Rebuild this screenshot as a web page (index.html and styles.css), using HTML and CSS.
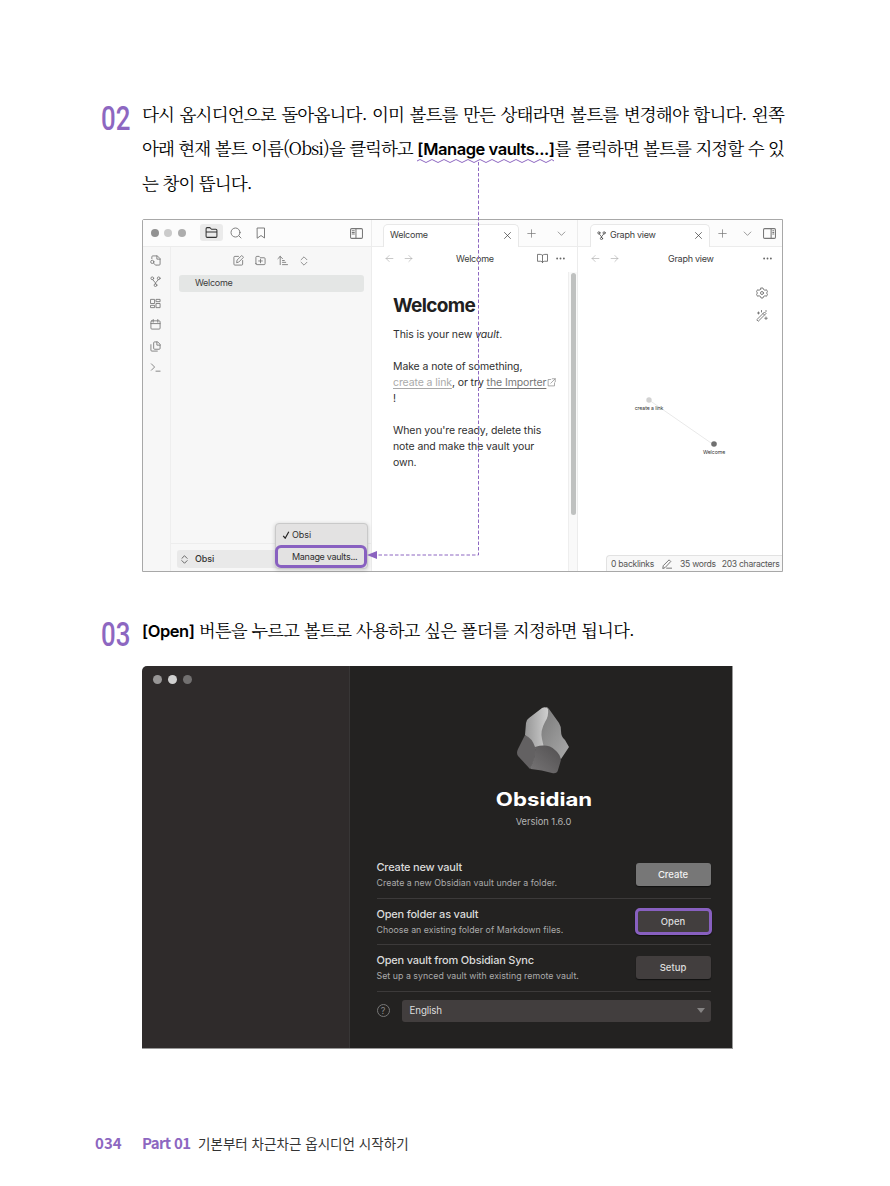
FILE: index.html
```html
<!DOCTYPE html>
<html lang="ko">
<head>
<meta charset="utf-8">
<title>기본부터 차근차근 옵시디언 시작하기</title>
<link rel="stylesheet" href="styles.css">
</head>
<body>
<svg class="defs" width="0" height="0">
  <symbol id="fork" viewBox="0 0 24 24"><circle cx="5" cy="5" r="3"/><circle cx="19" cy="5" r="3"/><circle cx="12" cy="20" r="3"/><path d="M6 8l5 6q1 1 1 3M18 8l-5 6q-1 1-1 3"/></symbol>
  <symbol id="left" viewBox="0 0 24 24"><path d="M21 12H3m8-8-8 8 8 8"/></symbol>
  <symbol id="right" viewBox="0 0 24 24"><path d="M3 12h18m-8-8 8 8-8 8"/></symbol>
  <symbol id="close" viewBox="0 0 24 24"><path d="M4 4l16 16M20 4 4 20"/></symbol>
  <symbol id="plus" viewBox="0 0 24 24"><path d="M2 12h20M12 2v20"/></symbol>
  <symbol id="down" viewBox="0 0 24 24"><path d="m3 8 9 9 9-9"/></symbol>
  <symbol id="updown" viewBox="0 0 24 24"><path d="m5 9 7-7 7 7M5 15l7 7 7-7"/></symbol>
  <symbol id="dots" viewBox="0 0 24 24"><g fill="currentColor" stroke="none"><circle cx="3" cy="12" r="2.500"/><circle cx="12" cy="12" r="2.500"/><circle cx="21" cy="12" r="2.500"/></g></symbol>
</svg>
<main class="page">
  <section class="step step-two">
    <div class="num">02</div>
    <div class="body">
      <p class="line">다시 옵시디언으로 돌아옵니다. 이미 볼트를 만든 상태라면 볼트를 변경해야 합니다. 왼쪽</p>
      <p class="line tight">아래 현재 볼트 이름<span class="lat">(Obsi)</span>을 클릭하고 <b class="key wavy">[Manage vaults...]<svg class="wave" width="137" height="5" viewBox="0 0 137 5"><path d="M0 3q3-3 6 0t6 0 6 0 6 0 6 0 6 0 6 0 6 0 6 0 6 0 6 0 6 0 6 0 6 0 6 0 6 0 6 0 6 0 6 0 6 0 6 0 6 0 5 0"/></svg></b>를 클릭하면 볼트를 지정할 수 있</p>
      <p class="line last">는 창이 뜹니다.</p>
      <div class="app">
        <div class="side">
          <div class="bar side-bar">
            <i class="dot d1"></i><i class="dot d2"></i><i class="dot d3"></i>
            <span class="folder"><svg class="ic s13" viewBox="0 0 24 24"><path d="M2 19V5a2 2 0 0 1 2-2h5l3 3h8a2 2 0 0 1 2 2v11a2 2 0 0 1-2 2H4a2 2 0 0 1-2-2zM2 11h20"/></svg></span>
            <svg class="ic s12 search" viewBox="0 0 24 24"><circle cx="11" cy="11" r="9"/><path d="m18 18 4 4"/></svg>
            <svg class="ic s12 mark" viewBox="0 0 24 24"><path d="M5 2h14v20l-7-5-7 5z"/></svg>
            <svg class="ic s13 panel" viewBox="0 0 24 24"><rect x="1" y="3" width="22" height="18" rx="2"/><path d="M11 3v18M4 7h4M4 10h4M4 13h4"/></svg>
          </div>
          <div class="side-main">
            <div class="ribbon">
              <svg class="ic" viewBox="0 0 24 24"><path d="M4 8V4a2 2 0 0 1 2-2h10l6 6v12a2 2 0 0 1-2 2h-7M15 2v7h7"/><circle cx="5" cy="15" r="3.500"/><path d="m8 18 4 4"/></svg>
              <svg class="ic"><use href="#fork"/></svg>
              <svg class="ic" viewBox="0 0 24 24"><path d="M2 3h8v9H2zM14 3h8v5h-8zM14 12h8v9h-8zM2 16h8v5H2z"/></svg>
              <svg class="ic" viewBox="0 0 24 24"><rect x="2" y="4" width="20" height="18" rx="2"/><path d="M2 10h20M7 1v6M17 1v6"/></svg>
              <svg class="ic" viewBox="0 0 24 24"><path d="M16 2h-6a2 2 0 0 0-2 2v12a2 2 0 0 0 2 2h10a2 2 0 0 0 2-2V8zM15 2v7h7M2 8v12a2 2 0 0 0 2 2h12"/></svg>
              <svg class="ic" viewBox="0 0 24 24"><path d="m3 4 7 7-7 7M13 20h9"/></svg>
            </div>
            <div class="files">
              <div class="tools">
                <svg class="ic" viewBox="0 0 24 24"><path d="M12 3H4a2 2 0 0 0-2 2v15a2 2 0 0 0 2 2h15a2 2 0 0 0 2-2v-8M8 16l1-5L19 1l4 4-10 10z"/></svg>
                <svg class="ic" viewBox="0 0 24 24"><path d="M2 19V5a2 2 0 0 1 2-2h5l3 3h8a2 2 0 0 1 2 2v11a2 2 0 0 1-2 2H4a2 2 0 0 1-2-2zM8 13h8M12 9v8"/></svg>
                <svg class="ic" viewBox="0 0 24 24"><path d="M7 21V3M2 8l5-5 5 5M12 12h4M12 16h7M12 21h11"/></svg>
                <svg class="ic s10"><use href="#updown"/></svg>
              </div>
              <div class="file">Welcome</div>
              <div class="vault"><div class="vault-btn"><svg class="ic s9"><use href="#updown"/></svg><span>Obsi</span></div></div>
            </div>
          </div>
          <div class="menu">
            <div class="menu-item"><svg class="check" viewBox="0 0 10 10"><path d="m1.500 6 2.500 3L8.500 1"/></svg>Obsi</div>
            <div class="menu-item hot">Manage vaults...</div>
          </div>
        </div>
        <div class="note">
          <div class="bar tabs">
            <div class="tab tab-note"><span>Welcome</span><svg class="ic s9"><use href="#close"/></svg></div>
            <svg class="ic s9 plus"><use href="#plus"/></svg>
            <svg class="ic s9 chev"><use href="#down"/></svg>
          </div>
          <div class="nav"><svg class="ic s9 pale"><use href="#left"/></svg><svg class="ic s9 pale fwd"><use href="#right"/></svg><span class="crumb c-note">Welcome</span>
            <svg class="ic" viewBox="0 0 24 24"><path d="M12 5v16M12 5q-2-2-5-2H1v15h7q3 0 4 3 1-3 4-3h7V3h-6q-3 0-5 2"/></svg><svg class="ic s9 more"><use href="#dots"/></svg></div>
          <div class="doc">
            <h1>Welcome</h1>
            <p>This is your new <em>vault</em>.</p>
            <p>Make a note of something,<br><u class="faint">create a link</u>, or try <u class="ext">the Importer</u> <svg class="ic s9" viewBox="0 0 24 24"><path d="M10 4H3v17h17v-8M14 2h8v8M22 2 10 14"/></svg><br>!</p>
            <p>When you're ready, delete this<br>note and make the vault your<br>own.</p>
          </div>
          <div class="scroll"><i></i></div>
        </div>
        <div class="graph">
          <div class="bar tabs">
            <div class="tab tab-graph"><svg class="ic s9"><use href="#fork"/></svg><span>Graph view</span><svg class="ic s9"><use href="#close"/></svg></div>
            <svg class="ic s9 plus"><use href="#plus"/></svg>
            <svg class="ic s9 gchev"><use href="#down"/></svg>
            <svg class="ic s13 gpanel" viewBox="0 0 24 24"><rect x="1" y="3" width="22" height="18" rx="2"/><path d="M15 3v18M18 7h2M18 10h2M18 13h2"/></svg>
          </div>
          <div class="nav"><svg class="ic s9 pale"><use href="#left"/></svg><svg class="ic s9 pale fwd"><use href="#right"/></svg><span class="crumb c-graph">Graph view</span><svg class="ic s9"><use href="#dots"/></svg></div>
          <div class="gtools">
            <svg class="ic s12" viewBox="0 0 24 24"><path d="m10 2 4 0 1 3 3 1.500 3-1 2 4-2 2.500 2 2.500-2 4-3-1-3 1.500-1 3h-4l-1-3-3-1.500-3 1-2-4L3 12 1 9.500l2-4 3 1L9 5z"/><circle cx="12" cy="12" r="3"/></svg>
            <svg class="ic s12" viewBox="0 0 24 24"><path d="M2 19 17 4l3 3L5 22zM14 7l3 3M5 4v4M3 6h4M11 1v3M20 14v5M17.500 16.500h5M20 1v2"/></svg>
          </div>
          <svg class="net" width="204" height="250" viewBox="0 0 204 250"><path d="M71 77 136 122" stroke="#e2e2e2" stroke-width=".8"/><circle cx="71" cy="77" r="2.700" fill="#d2d2d2"/><circle cx="136" cy="121" r="2.800" fill="#707070"/><text x="71" y="87">create a link</text><text x="136" y="131">Welcome</text></svg>
          <div class="status"><span>0 backlinks</span><svg class="ic s10" viewBox="0 0 24 24"><path d="M11 22h12M2 22l1-6L17 2l4 4L8 20z"/></svg><span class="words">35 words</span><span>203 characters</span></div>
        </div>
      </div>
    </div>
    <svg class="link" width="112" height="402" viewBox="0 0 112 402"><path d="M111.500 0V393H10" fill="none" stroke="#8d67c1" stroke-dasharray="3.500 2"/><path d="M0 393l10-4v8z" fill="#8b63c0"/></svg>
  </section>

  <section class="step step-three">
    <div class="num">03</div>
    <div class="body">
      <p class="line last open-line"><b class="key">[Open]</b> 버튼을 누르고 볼트로 사용하고 싶은 폴더를 지정하면 됩니다.</p>
      <div class="dialog">
        <div class="dleft"><i class="dot e1"></i><i class="dot e2"></i><i class="dot e3"></i></div>
        <div class="dmain">
          <svg class="logo" width="54" height="68" viewBox="0 0 54 68">
            <defs>
              <linearGradient id="a" x1="0" x2="1"><stop stop-color="#969696"/><stop offset="1" stop-color="#cfcfcf"/></linearGradient>
              <linearGradient id="b" x1="0" x2="1" y2="1"><stop stop-color="#777"/><stop offset="1" stop-color="#aaa"/></linearGradient>
              <linearGradient id="d" x1="0" y1="1" x2="1"><stop stop-color="#777576"/><stop offset="1" stop-color="#514f50"/></linearGradient>
            </defs>
            <path fill="url(#b)" d="M30 1q2 0 3 2l10 14q2 3 2 8 0 6 4 9l4 7-8 12-19-11-2-14z"/>
            <path fill="url(#a)" d="M26 2q4-2 6 1 1 7-3 13-5 9-3 17l2 9-9 1L9 29l1-12q0-3 3-5z"/>
            <path fill="#636162" d="M9 29q7 3 10 12 2 10-5 22L2 50q-2-3 0-7z"/>
            <path fill="url(#d)" d="M19 41q13-4 20 3 5 4 6 10l-3 10q-1 4-6 3-10-3-21-4l-1-1q6-10 5-21z"/>
          </svg>
          <div class="brand">Obsidian</div>
          <div class="version">Version 1.6.0</div>
          <div class="row"><div><h2>Create new vault</h2><p>Create a new Obsidian vault under a folder.</p></div><span class="btn create">Create</span></div>
          <div class="row"><div><h2>Open folder as vault</h2><p>Choose an existing folder of Markdown files.</p></div><span class="btn open">Open</span></div>
          <div class="row"><div><h2>Open vault from Obsidian Sync</h2><p>Set up a synced vault with existing remote vault.</p></div><span class="btn">Setup</span></div>
          <div class="lang"><span class="help">?</span><div class="select"><span>English</span><svg width="8" height="5" viewBox="0 0 8 5"><path d="M0 0h8L4 5z" fill="#858383"/></svg></div></div>
        </div>
      </div>
    </div>
  </section>
  <footer><b>034</b><b class="part">Part 01</b><span>기본부터 차근차근 옵시디언 시작하기</span></footer>
</main>
</body>
</html>
```
FILE: styles.css
```css
* { box-sizing: border-box; }
body { margin: 0; background: #fff; }
h1, h2, p { margin: 0; font-weight: inherit; }
.defs { position: absolute; }
.page { width: 890px; height: 1186px; padding: 97px 0 0 100px; overflow: hidden; display: flex; flex-direction: column; }
.step { position: relative; display: grid; grid-template-columns: 42px 642px; }
.step-two { height: 516px; }
.step-three { height: 520px; }
.num { font: 500 34px/40px Roboto, sans-serif; color: #8d67c1; transform: scaleX(.76); transform-origin: 0 0; margin: 1px 0 0 1px; white-space: nowrap; }
.line { height: 34.500px; line-height: 33px; font-family: "Noto Serif CJK KR", "Noto Serif KR", "Noto Sans CJK KR", sans-serif; font-size: 17.500px; letter-spacing: -.83px; color: #000; text-align: justify; text-align-last: justify; white-space: nowrap; }
.tight { letter-spacing: -1px; line-height: 32px; }
.last { text-align-last: left; letter-spacing: -.95px; }
.lat { font-size: 17.500px; }
.key { font-family: Inter, sans-serif; font-weight: 600; font-size: 16.500px; line-height: 30px; letter-spacing: -.45px; position: relative; display: inline-block; }
.wave { position: absolute; left: 0; bottom: 1px; fill: none; stroke: #8d67c1; stroke-width: 1; }
.link { position: absolute; left: 267px; top: 65px; }

.ic { width: 11px; height: 11px; flex: none; fill: none; stroke: currentColor; stroke-width: 1.900; stroke-linecap: round; stroke-linejoin: round; }
.s9 { width: 9px; height: 9px; }
.s10 { width: 10px; height: 10px; }
.s12 { width: 12px; height: 12px; }
.s13 { width: 13px; height: 13px; }
.dot { width: 8px; height: 8px; border-radius: 50%; flex: none; }

.app { width: 641px; height: 353px; margin-top: 18.500px; border: 1px solid #a8a8a8; border-radius: 2px 0 0 0; display: grid; grid-template-columns: 229px 206px 204px; font: 9px/12px Inter, sans-serif; letter-spacing: -.08px; color: #3c3c3c; background: #fff; }
.bar { height: 27px; border-bottom: 1px solid #ececec; background: #fcfcfc; display: flex; align-items: center; color: #777; }
.side { position: relative; display: flex; flex-direction: column; border-right: 1px solid #ececec; }
.side-bar { padding-left: 8px; }
.d1 { background: #929292; }
.d2 { background: #cbcbcb; margin-left: 5px; }
.d3 { background: #adadad; margin-left: 6px; }
.folder { width: 23px; height: 17px; border-radius: 3px; background: #ebebeb; color: #333; display: grid; place-items: center; margin-left: 14px; margin-top: -1px; }
.search { margin-left: 7px; }
.mark { margin-left: 13px; }
.panel { margin-left: 83px; }
.side-main { flex: 1; display: grid; grid-template-columns: 28px 1fr; background: #f7f7f7; color: #777; }
.ribbon { border-right: 1px solid #eee; padding: 8px 0 0 7px; display: flex; flex-direction: column; gap: 10.400px; }
.files { display: flex; flex-direction: column; }
.tools { display: flex; align-items: center; gap: 11px; padding: 8px 0 0 62px; height: 19px; }
.file { margin: 9px 7px 0 8px; padding-left: 16px; height: 17px; line-height: 16px; background: #e4e6e5; border-radius: 3px; color: #3c3c3c; letter-spacing: -.3px; }
.vault { margin-top: auto; height: 28px; border-top: 1px solid #ededed; padding: 6px 7px 0 6px; }
.vault-btn { height: 18px; background: #e9e9e9; border-radius: 3px; display: flex; align-items: center; padding-left: 3px; gap: 6px; color: #333; font-weight: 500; }
.menu { position: absolute; left: 132px; top: 303px; width: 93px; height: 46px; background: #e3e2e2; border: 1px solid #c9c9c9; border-radius: 4px; box-shadow: 0 1px 4px #0003; color: #2f2f2f; }
.menu-item { height: 22px; display: flex; align-items: center; gap: 2px; padding-left: 6px; }
.check { width: 8px; height: 8px; fill: none; stroke: #222; stroke-width: 1.500; }
.hot { border: 3px solid #8860c0; border-radius: 6px; margin: -1px 0 0 -1px; padding-left: 14px; height: 23px; width: 92px; white-space: nowrap; letter-spacing: -.29px; }

.note, .graph { position: relative; display: flex; flex-direction: column; }
.note { border-right: 1px solid #ececec; }
.tabs { align-items: flex-start; }
.tab { height: 23px; margin-top: 4px; background: #fff; border: 1px solid #e8e8e8; border-bottom: 0; border-radius: 5px 5px 0 0; display: flex; align-items: center; color: #3c3c3c; }
.tab-note { width: 136px; margin-left: 11px; justify-content: space-between; padding: 0 6px 2px; letter-spacing: -.25px; }
.tab-graph { width: 120px; margin-left: 12px; padding: 0 6px 2px 6px; gap: 4px; letter-spacing: -.25px; }
.tab-graph .ic:last-child { margin-left: auto; }
.plus { margin: 9px 0 0 8px; }
.chev { margin: 9px 0 0 21px; }
.gchev { margin: 9px 0 0 16px; }
.gpanel { margin: 7px 0 0 11px; }
.nav { display: flex; align-items: center; height: 23px; padding-left: 13px; color: #666; }
.pale { color: #aaa; stroke-width: 1.700; }
.fwd { margin-left: 10px; }
.crumb { color: #3c3c3c; letter-spacing: -.25px; }
.c-note { margin-left: 43px; width: 81px; }
.c-graph { margin-left: 49px; width: 95px; }
.more { margin-left: 8px; }
.doc { padding: 23px 0 0 21px; font-size: 10.500px; line-height: 16px; letter-spacing: -.1px; color: #303030; white-space: nowrap; }
.doc h1 { font-weight: 700; font-size: 19px; line-height: 26px; letter-spacing: -.65px; color: #202020; margin-bottom: 8px; }
.doc p { margin-bottom: 16px; }
.doc .ic { margin-left: -2px; color: #888; vertical-align: -1px; }
.faint { color: #aaa; }
.ext { color: #777; }
u { text-underline-offset: 1.500px; text-decoration-thickness: .7px; }
.scroll { position: absolute; right: 0; top: 52px; bottom: 0; width: 9px; background: #f9f9f9; border-left: 1px solid #eee; padding: 1px 1px 0 2px; }
.scroll i { display: block; height: 242px; border-radius: 3px; background: #bfc1c0; }
.gtools { display: flex; flex-direction: column; align-items: flex-end; gap: 11px; padding: 17px 14px 0 0; color: #777; }
.net { position: absolute; left: 0; top: 103px; }
.net text { font: 5.200px Inter, sans-serif; fill: #333; text-anchor: middle; }
.status { position: absolute; right: 0; bottom: 0; width: 176px; height: 16px; background: #f8f8f8; border: 1px solid #e2e2e2; border-width: 1px 0 0 1px; border-radius: 4px 0 0 0; display: flex; align-items: center; padding-left: 4px; font-size: 8.600px; letter-spacing: -.28px; color: #555; white-space: nowrap; }
.status .ic { margin-left: 8px; }
.words { margin: 0 6px 0 8px; }

.open-line { font-size: 17.200px; letter-spacing: -.7px; }
.dialog { width: 591px; height: 383px; margin-top: 18.500px; border-radius: 5px 0 0 0; border: 1px solid #999; border-width: 0 1px 1px 0; overflow: hidden; display: grid; grid-template-columns: 208px 1fr; font-family: Inter, sans-serif; }
.dleft { background: #2f2b2b; border-right: 1px solid #383636; display: flex; gap: 6px; padding: 9px 0 0 11px; }
.dleft .dot { width: 9px; height: 9px; }
.e1 { background: #989696; }
.e2 { background: #d0d0d0; }
.e3 { background: #727070; }
.dmain { background: #232221; color: #dadada; display: flex; flex-direction: column; padding: 40px 23px 0 26.500px; }
.logo { margin: 0 0 0 139.500px; flex: none; }
.brand { width: 334px; text-align: center; font-weight: 700; font-size: 18.500px; line-height: 24px; margin-top: 13px; color: #fff; transform: scaleX(1.200); }
.version { text-align: center; font-size: 9.300px; line-height: 12px; margin-top: 5px; color: #b5b5b5; }
.row { height: 46.500px; flex: none; border-bottom: 1px solid #3c3a3a; display: flex; justify-content: space-between; align-items: center; }
.version + .row { margin-top: 24px; }
.row h2 { font-weight: 500; font-size: 11px; line-height: 15px; letter-spacing: -.2px; white-space: nowrap; padding-top: 1px; }
.row p { font-size: 8.800px; line-height: 15px; letter-spacing: .03px; color: #aaa; white-space: nowrap; }
.btn { width: 75px; height: 23px; border-radius: 3px; background: #423e3e; display: grid; place-items: center; font-size: 9.500px; font-weight: 500; color: #ddd; box-shadow: 0 1px 1px #111; }
.create { background: #777; color: #f3f3f3; }
.open { height: 27px; width: 77px; margin-right: -1px; border: 3px solid #8860c0; border-radius: 5px; }
.lang { display: flex; align-items: center; margin-top: 8px; gap: 12px; }
.help { width: 13px; height: 13px; border: 1px solid #777; border-radius: 50%; color: #888; font-size: 9px; line-height: 11px; text-align: center; }
.select { flex: 1; height: 22px; border-radius: 3px; background: #423e3e; display: flex; align-items: center; justify-content: space-between; padding: 0 6px 0 8px; font-size: 9.800px; letter-spacing: -.15px; color: #ddd; }

footer { display: flex; align-items: baseline; margin-left: -5px; font: 13.500px/20px "Noto Sans CJK KR", sans-serif; color: #333; letter-spacing: .03px; white-space: nowrap; }
footer b { width: 47px; font-size: 15px; color: #8d67c1; }
footer .part { width: 56px; letter-spacing: -.65px; }
```
